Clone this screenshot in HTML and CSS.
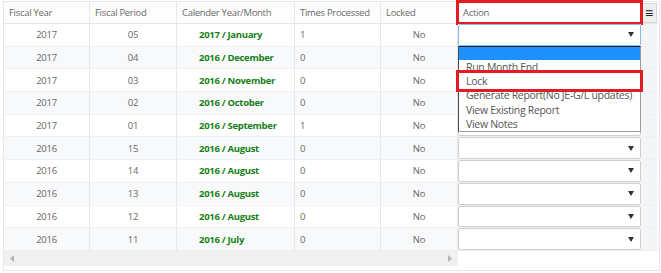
FILE: index.html
```html
<!DOCTYPE html>
<html>
<head>
	<title>Month End Periods</title>
	<link rel="stylesheet" href="styles.css">
</head>
<body>
	<div class="grid">
		<div class="row head">
			<div class="cell c1">Fiscal Year</div>
			<div class="cell c2">Fiscal Period</div>
			<div class="cell c3">Calender Year/Month</div>
			<div class="cell c4">Times Processed</div>
			<div class="cell c5">Locked</div>
			<div class="cell c6 mark">Action</div>
			<div class="cell c7"><span class="menu-btn">&#8801;</span></div>
		</div>

		<div class="row">
			<div class="cell c1 mid">2017</div>
			<div class="cell c2 mid">05</div>
			<div class="cell c3 month">2017 / January</div>
			<div class="cell c4">1</div>
			<div class="cell c5 mid">No</div>
			<div class="cell c6 pick">
				<div class="select open"><svg width="6" height="5" viewBox="0 0 6 5"><path d="M0 0h6L3 5z" fill="#333"/></svg></div>
				<div class="options">
					<div class="opt sel"></div>
					<div class="opt">Run Month End</div>
					<div class="opt mark">Lock</div>
					<div class="opt">Generate Report(No JE-G/L updates)</div>
					<div class="opt">View Existing Report</div>
					<div class="opt">View Notes</div>
				</div>
			</div>
			<div class="cell c7"></div>
		</div>
		<div class="row">
			<div class="cell c1 mid">2017</div>
			<div class="cell c2 mid">04</div>
			<div class="cell c3 month">2016 / December</div>
			<div class="cell c4">0</div>
			<div class="cell c5 mid">No</div>
			<div class="cell c6 pick"><div class="select"><svg width="6" height="5" viewBox="0 0 6 5"><path d="M0 0h6L3 5z" fill="#333"/></svg></div></div>
			<div class="cell c7"></div>
		</div>
		<div class="row">
			<div class="cell c1 mid">2017</div>
			<div class="cell c2 mid">03</div>
			<div class="cell c3 month">2016 / November</div>
			<div class="cell c4">0</div>
			<div class="cell c5 mid">No</div>
			<div class="cell c6 pick"><div class="select"><svg width="6" height="5" viewBox="0 0 6 5"><path d="M0 0h6L3 5z" fill="#333"/></svg></div></div>
			<div class="cell c7"></div>
		</div>
		<div class="row">
			<div class="cell c1 mid">2017</div>
			<div class="cell c2 mid">02</div>
			<div class="cell c3 month">2016 / October</div>
			<div class="cell c4">0</div>
			<div class="cell c5 mid">No</div>
			<div class="cell c6 pick"><div class="select"><svg width="6" height="5" viewBox="0 0 6 5"><path d="M0 0h6L3 5z" fill="#333"/></svg></div></div>
			<div class="cell c7"></div>
		</div>
		<div class="row">
			<div class="cell c1 mid">2017</div>
			<div class="cell c2 mid">01</div>
			<div class="cell c3 month">2016 / September</div>
			<div class="cell c4">1</div>
			<div class="cell c5 mid">No</div>
			<div class="cell c6 pick"><div class="select"><svg width="6" height="5" viewBox="0 0 6 5"><path d="M0 0h6L3 5z" fill="#333"/></svg></div></div>
			<div class="cell c7"></div>
		</div>
		<div class="row">
			<div class="cell c1 mid">2016</div>
			<div class="cell c2 mid">15</div>
			<div class="cell c3 month">2016 / August</div>
			<div class="cell c4">0</div>
			<div class="cell c5 mid">No</div>
			<div class="cell c6 pick"><div class="select"><svg width="6" height="5" viewBox="0 0 6 5"><path d="M0 0h6L3 5z" fill="#333"/></svg></div></div>
			<div class="cell c7"></div>
		</div>
		<div class="row">
			<div class="cell c1 mid">2016</div>
			<div class="cell c2 mid">14</div>
			<div class="cell c3 month">2016 / August</div>
			<div class="cell c4">0</div>
			<div class="cell c5 mid">No</div>
			<div class="cell c6 pick"><div class="select"><svg width="6" height="5" viewBox="0 0 6 5"><path d="M0 0h6L3 5z" fill="#333"/></svg></div></div>
			<div class="cell c7"></div>
		</div>
		<div class="row">
			<div class="cell c1 mid">2016</div>
			<div class="cell c2 mid">13</div>
			<div class="cell c3 month">2016 / August</div>
			<div class="cell c4">0</div>
			<div class="cell c5 mid">No</div>
			<div class="cell c6 pick"><div class="select"><svg width="6" height="5" viewBox="0 0 6 5"><path d="M0 0h6L3 5z" fill="#333"/></svg></div></div>
			<div class="cell c7"></div>
		</div>
		<div class="row">
			<div class="cell c1 mid">2016</div>
			<div class="cell c2 mid">12</div>
			<div class="cell c3 month">2016 / August</div>
			<div class="cell c4">0</div>
			<div class="cell c5 mid">No</div>
			<div class="cell c6 pick"><div class="select"><svg width="6" height="5" viewBox="0 0 6 5"><path d="M0 0h6L3 5z" fill="#333"/></svg></div></div>
			<div class="cell c7"></div>
		</div>
		<div class="row">
			<div class="cell c1 mid">2016</div>
			<div class="cell c2 mid">11</div>
			<div class="cell c3 month">2016 / July</div>
			<div class="cell c4">0</div>
			<div class="cell c5 mid">No</div>
			<div class="cell c6 pick"><div class="select"><svg width="6" height="5" viewBox="0 0 6 5"><path d="M0 0h6L3 5z" fill="#333"/></svg></div></div>
			<div class="cell c7"></div>
		</div>

		<div class="hscroll">
			<div class="track">
				<svg width="4" height="7" viewBox="0 0 4 7"><path d="M4 0v7L0 3.5z" fill="#b5b5b5"/></svg>
				<svg width="4" height="7" viewBox="0 0 4 7"><path d="M0 0v7l4-3.5z" fill="#b5b5b5"/></svg>
			</div>
		</div>
	</div>
</body>
</html>
```

FILE: styles.css
```css
body {
	margin: 0;
	padding: 1px 0 0 3px;
	font-family: "Open Sans", sans-serif;
	font-size: 9.5px;
	letter-spacing: -0.3px;
	color: #666;
}
.grid {
	width: 657px;
	box-sizing: border-box;
	border: 1px solid #e3e6ea;
	padding-bottom: 4px;
}
.row {
	display: flex;
	height: 22.7px;
}
.row:nth-child(odd) {
	background: #f8f9fb;
}
.row.head {
	height: 22px;
	background: #fdfdfd;
	border-bottom: 1px solid #e3e6ea;
	box-sizing: border-box;
}
.cell {
	box-sizing: border-box;
	border-right: 1px solid #e6e8ec;
	padding: 0 5px;
	display: flex;
	align-items: center;
	white-space: nowrap;
	border-bottom: 1px solid #eef0f3;
}
.head .cell {
	border-bottom: none;
	color: #6a6a6a;
}
.c1 { width: 86px; }
.c2 { width: 87px; }
.c3 { width: 118px; padding-left: 22px; }
.c4 { width: 86px; }
.c5 { width: 77px; }
.c6 { width: 183px; }
.c7 {
	width: 16px;
	border-right: none;
	background: #f3f5f7;
	padding: 0;
}
.head .c7 {
	background: #fdfdfd;
	justify-content: flex-end;
}
.head .c3 { padding-left: 5px; }
.mid { justify-content: center; }
.month {
	color: #168016;
	font-weight: bold;
}
.mark {
	outline: 3px solid #e31b23;
	outline-offset: -1px;
	position: relative;
}
.menu-btn {
	display: flex;
	align-items: center;
	justify-content: center;
	width: 16px;
	height: 20px;
	background: #eeeeee;
	border: 1px solid #d6d6d6;
	box-sizing: border-box;
	color: #222;
	font-size: 14px;
	letter-spacing: 0;
}
.pick {
	padding: 0;
	position: relative;
	border-right: none;
	background: #fff;
}
.select {
	box-sizing: border-box;
	width: 100%;
	height: 100%;
	border: 1px solid #cfcfcf;
	border-radius: 2px;
	background: #fff;
	display: flex;
	align-items: center;
	justify-content: flex-end;
	padding-right: 6px;
}
.select.open {
	border-color: #8fb8e8;
}
.options {
	position: absolute;
	top: 100%;
	left: 0;
	width: 183px;
	box-sizing: border-box;
	background: #fff;
	border: 1px solid #9c9c9c;
	border-left-color: #4a4a4a;
	border-top-color: #222;
	z-index: 2;
	color: #555;
	font-size: 10.5px;
}
.opt {
	height: 14.3px;
	line-height: 14.3px;
	padding-left: 7px;
}
.opt.sel {
	height: 13px;
	background: #1e90ff;
}
.opt.mark {
	outline-offset: 1px;
	margin: 0 1px;
	padding-left: 6px;
}
.hscroll {
	height: 15px;
	display: flex;
}
.track {
	width: 454px;
	background: #f1f1f1;
	display: flex;
	align-items: center;
	justify-content: space-between;
	padding: 0 6px;
	box-sizing: border-box;
}
```
